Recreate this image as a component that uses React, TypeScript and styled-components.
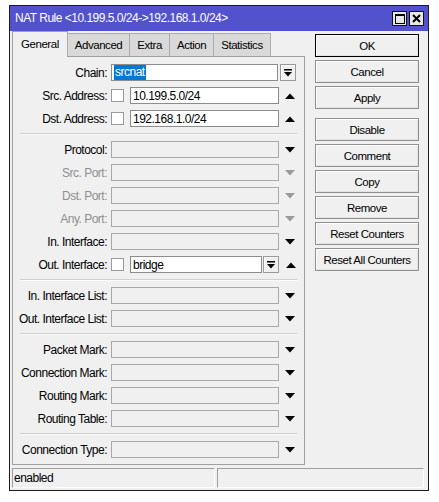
import React from "react";
import styled, { createGlobalStyle, css } from "styled-components";

const Global = createGlobalStyle`
  html, body { margin: 0; padding: 0; background: #ffffff; }
  body { font-family: "Liberation Sans", Arial, sans-serif; }
  * { box-sizing: border-box; }
`;

const Window = styled.div`
  margin: 5px 0 0 9px;
  width: 420px;
  height: 486px;
  border: 1px solid #1c1c1c;
  background: #f0f0f0;
  display: flex;
  flex-direction: column;
  font-family: "Liberation Sans", Arial, sans-serif;
  font-size: 12px;
  letter-spacing: -0.5px;
  color: #000;
`;

const TitleBar = styled.div`
  height: 25px;
  flex: none;
  background: #5252cc;
  display: flex;
  align-items: center;
  padding: 0 4px 0 5px;
`;

const TitleText = styled.div`
  flex: 1;
  color: #ffffff;
  font-size: 12px;
  letter-spacing: -0.5px;
  padding-bottom: 1px;
`;

const TitleButtons = styled.div`
  display: flex;
  gap: 2px;
`;

const TitleButton = styled.div`
  width: 15px;
  height: 15px;
  border: 1px solid #111;
  background: #e8e8e8;
  display: flex;
  align-items: center;
  justify-content: center;
`;

const Body = styled.div`
  flex: 1;
  display: flex;
  gap: 10px;
  padding: 0 9px 0 2px;
  min-height: 0;
`;

const LeftCol = styled.div`
  width: 293px;
  display: flex;
  flex-direction: column;
`;

const TabStrip = styled.div`
  height: 25px;
  display: flex;
  align-items: flex-end;
  position: relative;
  z-index: 1;
`;

const Tab = styled.div<{ $active?: boolean }>`
  height: 23px;
  padding: 0 7px;
  display: flex;
  align-items: center;
  justify-content: center;
  background: #d9d9d9;
  border: 1px solid #acacac;
  border-bottom: none;
  margin-left: -1px;
  font-size: 11.5px;
  letter-spacing: -0.45px;
  ${(p) =>
    p.$active &&
    css`
      height: 26px;
      margin-bottom: -1px;
      margin-left: 0;
      background: #f0f0f0;
      padding: 0 8px 2px;
      border-color: #a0a0a0;
    `}
`;

const Panel = styled.div`
  flex: 1;
  border: 1px solid #a0a0a0;
  padding-top: 7px;
  display: flex;
  flex-direction: column;
`;

const Group = styled.div`
  display: flex;
  flex-direction: column;
  gap: 6px;
`;

const Separator = styled.div`
  height: 1px;
  margin: 6px 7px 6px;
  background: #cfcfcf;
  border-bottom: 1px solid #fbfbfb;
  box-sizing: content-box;
`;

const Row = styled.div`
  height: 17px;
  display: flex;
  align-items: center;
`;

const Label = styled.div<{ $disabled?: boolean }>`
  width: 94px;
  margin-right: 4px;
  text-align: right;
  white-space: nowrap;
  color: ${(p) => (p.$disabled ? "#8f8f8f" : "#000")};
`;

const Input = styled.div<{ $w: number; $filled?: boolean }>`
  width: ${(p) => p.$w}px;
  height: 17px;
  border: 1px solid ${(p) => (p.$filled ? "#8c8c8c" : "#a8a8a8")};
  background: ${(p) => (p.$filled ? "#ffffff" : "#f0f0f0")};
  display: flex;
  align-items: center;
  padding: 0 2px;
  white-space: nowrap;
  overflow: hidden;
`;

const Selected = styled.span`
  background: #0078d7;
  color: #fff;
  padding: 1px 1px 2px;
`;

const Check = styled.div`
  width: 13px;
  height: 13px;
  border: 1px solid #9a9a9a;
  background: #fff;
  margin-right: 6px;
`;

const DropButton = styled.div<{ $ml: number }>`
  width: 16px;
  height: 17px;
  margin-left: ${(p) => p.$ml}px;
  border: 1px solid #9a9a9a;
  background: #f0f0f0;
  box-shadow: inset 1px 1px 0 #fff;
  display: flex;
  align-items: center;
  justify-content: center;
`;

const Arrow = styled.div<{ $ml?: number }>`
  margin-left: ${(p) => p.$ml ?? 6}px;
  width: 10px;
  display: flex;
  align-items: center;
`;

const ButtonCol = styled.div`
  width: 104px;
  padding-top: 3px;
  display: flex;
  flex-direction: column;
  gap: 3px;
`;

const Button = styled.div<{ $default?: boolean; $spaced?: boolean }>`
  height: 23px;
  display: flex;
  align-items: center;
  justify-content: center;
  background: #f0f0f0;
  font-size: 11.5px;
  letter-spacing: -0.45px;
  border: 1px solid ${(p) => (p.$default ? "#000" : "#8f8f8f")};
  box-shadow: inset 1px 1px 0 #fff, inset -1px -1px 0 #e3e3e3;
  margin-top: ${(p) => (p.$spaced ? "6px" : "0")};
`;

const StatusBar = styled.div`
  height: 20px;
  flex: none;
  margin: 3px 4px 2px 2px;
  display: flex;
  gap: 2px;
`;

const StatusCell = styled.div<{ $w?: number }>`
  ${(p) => (p.$w ? `width: ${p.$w}px;` : "flex: 1;")}
  border-top: 1px solid #a0a0a0;
  border-left: 1px solid #a0a0a0;
  border-right: 1px solid #ffffff;
  border-bottom: 1px solid #ffffff;
  display: flex;
  align-items: center;
  padding-left: 1px;
`;

const Down = ({ gray }: { gray?: boolean }) => (
  <svg width="10" height="6" viewBox="0 0 10 6">
    <polygon points="0,0 10,0 5,5.5" fill={gray ? "#9a9a9a" : "#000"} />
  </svg>
);

const Up = () => (
  <svg width="10" height="6" viewBox="0 0 10 6">
    <polygon points="0,6 10,6 5,0.5" fill="#000" />
  </svg>
);

const DropIcon = () => (
  <svg width="8" height="8" viewBox="0 0 8 8">
    <rect x="0" y="0" width="8" height="1.5" fill="#000" />
    <polygon points="0,3 8,3 4,7.5" fill="#000" />
  </svg>
);

const MaxIcon = () => (
  <svg width="10" height="10" viewBox="0 0 10 10">
    <rect x="0.5" y="0.5" width="9" height="9" fill="none" stroke="#000" />
    <rect x="0" y="0" width="10" height="2" fill="#000" />
  </svg>
);

const CloseIcon = () => (
  <svg width="9" height="9" viewBox="0 0 9 9">
    <path d="M1 1 L8 8 M8 1 L1 8" stroke="#000" strokeWidth="2" />
  </svg>
);

type Plain = { label: string; disabled?: boolean };

const PlainRow = ({ label, disabled }: Plain) => (
  <Row>
    <Label $disabled={disabled}>{label}</Label>
    <Input $w={168} />
    <Arrow>
      <Down gray={disabled} />
    </Arrow>
  </Row>
);

export default function App() {
  return (
    <>
      <Global />
      <Window>
        <TitleBar>
          <TitleText>NAT Rule &lt;10.199.5.0/24-&gt;192.168.1.0/24&gt;</TitleText>
          <TitleButtons>
            <TitleButton>
              <MaxIcon />
            </TitleButton>
            <TitleButton>
              <CloseIcon />
            </TitleButton>
          </TitleButtons>
        </TitleBar>
        <Body>
          <LeftCol>
            <TabStrip>
              <Tab $active>General</Tab>
              <Tab>Advanced</Tab>
              <Tab>Extra</Tab>
              <Tab>Action</Tab>
              <Tab>Statistics</Tab>
            </TabStrip>
            <Panel>
              <Group>
                <Row>
                  <Label>Chain:</Label>
                  <Input $w={167} $filled>
                    <Selected>srcnat</Selected>
                  </Input>
                  <DropButton $ml={2}>
                    <DropIcon />
                  </DropButton>
                </Row>
                <Row>
                  <Label>Src. Address:</Label>
                  <Check />
                  <Input $w={149} $filled>10.199.5.0/24</Input>
                  <Arrow $ml={6}>
                    <Up />
                  </Arrow>
                </Row>
                <Row>
                  <Label>Dst. Address:</Label>
                  <Check />
                  <Input $w={149} $filled>192.168.1.0/24</Input>
                  <Arrow $ml={6}>
                    <Up />
                  </Arrow>
                </Row>
              </Group>
              <Separator />
              <Group>
                <PlainRow label="Protocol:" />
                <PlainRow label="Src. Port:" disabled />
                <PlainRow label="Dst. Port:" disabled />
                <PlainRow label="Any. Port:" disabled />
                <PlainRow label="In. Interface:" />
                <Row>
                  <Label>Out. Interface:</Label>
                  <Check />
                  <Input $w={132} $filled>bridge</Input>
                  <DropButton $ml={1}>
                    <DropIcon />
                  </DropButton>
                  <Arrow $ml={7}>
                    <Up />
                  </Arrow>
                </Row>
              </Group>
              <Separator />
              <Group>
                <PlainRow label="In. Interface List:" />
                <PlainRow label="Out. Interface List:" />
              </Group>
              <Separator />
              <Group>
                <PlainRow label="Packet Mark:" />
                <PlainRow label="Connection Mark:" />
                <PlainRow label="Routing Mark:" />
                <PlainRow label="Routing Table:" />
              </Group>
              <Separator />
              <Group>
                <PlainRow label="Connection Type:" />
              </Group>
            </Panel>
          </LeftCol>
          <ButtonCol>
            <Button $default>OK</Button>
            <Button>Cancel</Button>
            <Button>Apply</Button>
            <Button $spaced>Disable</Button>
            <Button>Comment</Button>
            <Button>Copy</Button>
            <Button>Remove</Button>
            <Button>Reset Counters</Button>
            <Button>Reset All Counters</Button>
          </ButtonCol>
        </Body>
        <StatusBar>
          <StatusCell $w={203}>enabled</StatusCell>
          <StatusCell />
        </StatusBar>
      </Window>
    </>
  );
}
